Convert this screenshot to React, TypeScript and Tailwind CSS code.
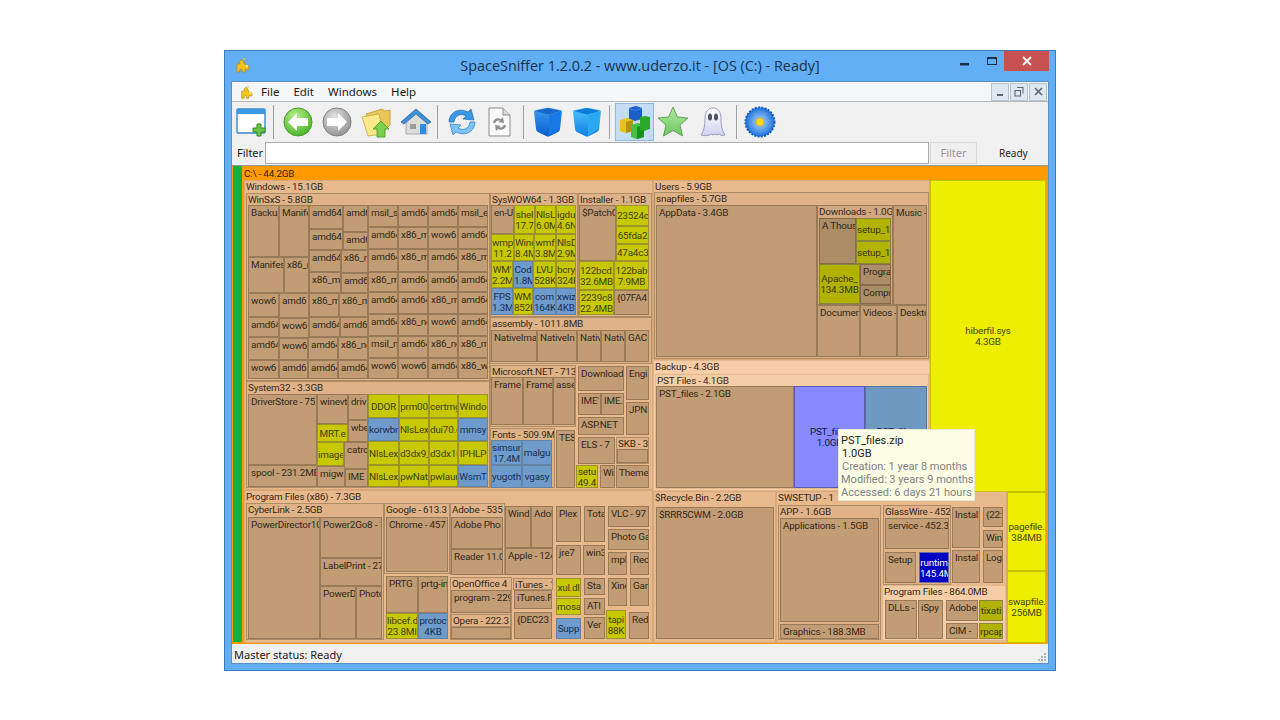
import React from 'react';

type Kind = 'l1' | 'l1b' | 'l2' | 'l3' | 'dir' | 'dir2' | 'yel' | 'yel2' | 'blue' | 'sys' | 'zip' | 'navy' | 'hib' | 'bare';
type Cell = [number, number, number, number, string, Kind];

const kinds: Record<Kind, string> = {
  l1: 'bg-[#e8b98d] border-[#d9a878] text-[#33291a] pl-[1px]',
  l1b: 'bg-[#f5cda6] border-[#e3b88c] text-[#33291a] pl-[1px]',
  l2: 'bg-[#dfb288] border-[#ad8c68] text-[#33291a] pl-[1px]',
  l3: 'bg-[#d4a87e] border-[#987a58] text-[#33291a] pl-[1px]',
  dir: 'bg-[#c29c74] border-[#997a58] text-[#33291a] pl-[2px] pt-[1px]',
  dir2: 'bg-[#ad8c68] border-[#86694a] text-[#33291a] pl-[2px] pt-[1px]',
  yel: 'bg-[#c8c800] border-[#9c9428] text-[#3f3f10] text-center justify-center',
  yel2: 'bg-[#b2b200] border-[#86863c] text-[#38380c] text-center justify-center',
  blue: 'bg-[#6f9bcc] border-[#6484a6] text-[#182f50] text-center justify-center',
  sys: 'bg-[#eeee00] border-[#c8c000] text-[#46460c] text-center justify-center',
  zip: 'bg-[#8888ff] border-[#5a5ab8] text-[#14144c] text-center justify-center',
  navy: 'bg-[#0000c4] border-[#6c6c9c] text-white text-center justify-center',
  hib: 'bg-[#7099c1] border-[#56759a] text-[#142c4c] text-center justify-center',
  bare: 'bg-[#c29c74] border-[#997a58] text-[#33291a]',
};

const xs = [368, 398, 428, 458, 488];
const ys = [205, 227, 249, 272, 292, 314, 336, 358, 379];
const sxsRows = [
  ['msil_s', 'amd64', 'amd64', 'msil_e'],
  ['amd64', 'x86_m', 'wow6', 'amd64'],
  ['amd64', 'x86_m', 'amd64', 'x86_m'],
  ['x86_m', 'amd64', 'amd64', 'amd64'],
  ['amd64', 'amd64', 'x86_m', 'amd64'],
  ['amd64', 'x86_ne', 'wow6', 'amd64'],
  ['msil_m', 'amd64', 'x86_ne', 'x86_m'],
  ['wow6', 'wow6', 'amd64', 'x86_w'],
];
const sxsGrid: Cell[] = sxsRows.flatMap((row, r) =>
  row.map((t, c): Cell => [xs[c], ys[r], xs[c + 1], ys[r + 1], t, 'dir'])
);

const sys32x = [368, 399, 429, 458, 488];
const sys32y = [394, 418, 441, 465, 487];
const sys32: [string, Kind][][] = [
  [['DDOR', 'yel'], ['prm00', 'yel'], ['certmg', 'yel'], ['Windo', 'yel']],
  [['korwbr', 'blue'], ['NlsLex', 'yel'], ['dui70.c', 'yel'], ['mmsy', 'blue']],
  [['NlsLex', 'yel'], ['d3dx9_', 'yel'], ['d3dx10', 'yel'], ['IPHLP', 'yel']],
  [['NlsLex', 'yel'], ['pwNat', 'yel'], ['pwlaur', 'yel'], ['WsmT', 'blue']],
];
const sys32Grid: Cell[] = sys32.flatMap((row, r) =>
  row.map(([t, k], c): Cell => [sys32x[c], sys32y[r], sys32x[c + 1], sys32y[r + 1], t, k])
);

const cells: Cell[] = [
  // top level blocks
  [244, 180, 653, 490, 'Windows - 15.1GB', 'l1'],
  [653, 180, 930, 360, 'Users - 5.9GB', 'l1'],
  [653, 360, 930, 491, 'Backup - 4.3GB', 'l1b'],
  [244, 490, 653, 643, 'Program Files (x86) - 7.3GB', 'l1'],
  [653, 491, 776, 643, '$Recycle.Bin - 2.2GB', 'l1'],
  [776, 491, 1007, 643, 'SWSETUP - 1', 'l1'],

  // Windows
  [246, 193, 490, 381, 'WinSxS - 5.8GB', 'l2'],
  [248, 205, 279, 257, 'Backup', 'dir'],
  [279, 205, 309, 257, 'Manife', 'dir'],
  [309, 205, 343, 229, 'amd64_', 'dir'],
  [343, 205, 368, 232, 'amd6', 'dir'],
  [309, 229, 343, 250, 'amd64_', 'dir'],
  [343, 232, 368, 250, 'amd6', 'dir'],
  [248, 257, 284, 293, 'Manifes', 'dir'],
  [284, 257, 309, 293, 'x86_r', 'dir'],
  [309, 250, 341, 272, 'amd64', 'dir'],
  [341, 250, 368, 273, 'x86_n', 'dir'],
  [309, 272, 341, 293, 'x86_mi', 'dir'],
  [341, 273, 368, 293, 'amd6', 'dir'],
  [248, 293, 279, 317, 'wow6', 'dir'],
  [279, 293, 309, 318, 'amd6', 'dir'],
  [309, 293, 339, 317, 'x86_m', 'dir'],
  [339, 293, 368, 317, 'x86_m', 'dir'],
  [248, 317, 279, 337, 'amd64', 'dir'],
  [279, 318, 309, 338, 'wow6', 'dir'],
  [309, 317, 340, 337, 'amd64', 'dir'],
  [340, 317, 368, 337, 'amd64', 'dir'],
  [248, 337, 279, 360, 'amd64', 'dir'],
  [279, 338, 308, 360, 'wow6', 'dir'],
  [308, 337, 338, 360, 'amd64', 'dir'],
  [338, 337, 368, 360, 'x86_ne', 'dir'],
  [248, 360, 279, 379, 'wow6', 'dir'],
  [279, 360, 308, 379, 'amd6', 'dir'],
  [308, 360, 338, 379, 'amd64', 'dir'],
  [338, 360, 368, 379, 'amd64', 'dir'],
  ...sxsGrid,

  [246, 381, 490, 488, 'System32 - 3.3GB', 'l2'],
  [248, 394, 317, 465, 'DriverStore - 75', 'dir'],
  [248, 465, 317, 487, 'spool - 231.2MB', 'dir'],
  [317, 394, 348, 424, 'winevt', 'dir'],
  [348, 394, 368, 420, 'driv', 'dir'],
  [317, 424, 348, 442, 'MRT.e', 'yel'],
  [348, 420, 368, 442, 'wbe', 'dir'],
  [317, 442, 344, 466, 'image', 'yel'],
  [344, 442, 368, 469, 'catro', 'dir'],
  [317, 466, 345, 487, 'migw', 'dir'],
  [345, 469, 368, 487, 'IME', 'dir'],
  ...sys32Grid,

  [490, 193, 578, 317, 'SysWOW64 - 1.3GB', 'l2'],
  [491, 205, 514, 234, 'en-U', 'dir'],
  [514, 205, 535, 234, 'shel\n17.7', 'yel'],
  [535, 205, 556, 234, 'NlsL\n6.0M', 'yel'],
  [556, 205, 576, 234, 'igdu\n4.6N', 'yel'],
  [491, 234, 514, 261, 'wmp\n11.2', 'yel'],
  [514, 234, 534, 261, 'Wind\n8.4M', 'yel'],
  [534, 234, 556, 261, 'wmf\n3.8M', 'yel'],
  [556, 234, 576, 261, 'NlsD\n2.9M', 'yel'],
  [491, 261, 513, 288, "WM'\n2.2M", 'yel'],
  [513, 261, 533, 288, 'Cod\n1.8M', 'blue'],
  [533, 261, 556, 288, 'LVU\n528K', 'yel'],
  [556, 261, 576, 288, 'bcry\n324K', 'yel'],
  [491, 288, 513, 315, 'FPS\n1.3M', 'blue'],
  [513, 288, 533, 315, 'WMS\n852K', 'yel'],
  [533, 288, 556, 315, 'com\n164K', 'blue'],
  [556, 288, 576, 315, 'xwiz\n4KB', 'blue'],

  [578, 193, 652, 317, 'Installer - 1.1GB', 'l2'],
  [579, 205, 616, 261, '$PatchC', 'dir'],
  [616, 205, 649, 226, '23524c', 'yel'],
  [616, 226, 649, 244, '65fda2', 'yel'],
  [616, 244, 649, 261, '47a4c3', 'yel'],
  [579, 261, 614, 290, '122bcd.\n32.6MB', 'yel'],
  [614, 261, 649, 290, '122bab\n7.9MB', 'yel'],
  [579, 290, 614, 315, '2239c8\n22.4MB', 'yel'],
  [614, 290, 649, 315, '{07FA4', 'dir'],

  [490, 317, 652, 364, 'assembly - 1011.8MB', 'l2'],
  [491, 330, 537, 362, 'NativeIma', 'dir'],
  [537, 330, 577, 362, 'NativeIn', 'dir'],
  [577, 330, 601, 362, 'Nativ', 'dir'],
  [601, 330, 625, 362, 'Nativ', 'dir'],
  [625, 330, 649, 362, 'GAC', 'dir'],

  [490, 365, 576, 427, 'Microsoft.NET - 713', 'l2'],
  [491, 377, 523, 425, 'Frame', 'dir'],
  [523, 377, 553, 425, 'Frame', 'dir'],
  [553, 377, 575, 425, 'asse', 'dir'],
  [490, 428, 555, 488, 'Fonts - 509.9M', 'l2'],
  [491, 440, 522, 465, 'simsun\n17.4M', 'blue'],
  [522, 440, 552, 465, 'malgu', 'blue'],
  [491, 465, 522, 488, 'yugoth', 'blue'],
  [522, 465, 552, 488, 'vgasy', 'blue'],
  [556, 430, 575, 488, 'TES', 'dir'],
  [578, 366, 624, 391, 'Download', 'dir'],
  [626, 366, 649, 400, 'Engi', 'dir'],
  [578, 393, 601, 415, "IME'", 'dir'],
  [601, 393, 624, 415, 'IME.', 'dir'],
  [626, 402, 649, 435, 'JPN', 'dir'],
  [578, 417, 624, 435, 'ASP.NET', 'dir'],
  [578, 437, 615, 464, 'ELS - 7', 'dir'],
  [616, 437, 649, 464, 'SKB - 3', 'l2'],
  [617, 449, 648, 463, '', 'bare'],
  [576, 465, 598, 488, 'setu\n49.4', 'yel'],
  [600, 465, 615, 488, 'Wir', 'dir'],
  [616, 465, 649, 488, 'Theme', 'dir'],

  // Users
  [654, 192, 929, 359, 'snapfiles - 5.7GB', 'l2'],
  [656, 205, 817, 357, 'AppData - 3.4GB', 'dir'],
  [817, 205, 893, 305, 'Downloads - 1.0G', 'l3'],
  [819, 218, 856, 264, 'A Thous', 'dir2'],
  [856, 218, 891, 241, 'setup_1', 'yel2'],
  [856, 241, 891, 264, 'setup_1', 'yel2'],
  [819, 264, 860, 304, 'Apache_\n134.3MB', 'yel2'],
  [860, 264, 891, 285, 'Progra', 'dir2'],
  [860, 285, 891, 304, 'Compr', 'dir2'],
  [893, 205, 927, 305, 'Music -', 'dir'],
  [817, 305, 860, 357, 'Documen', 'dir'],
  [860, 305, 897, 357, 'Videos -', 'dir'],
  [897, 305, 927, 357, 'Deskto', 'dir'],

  // Backup
  [655, 374, 929, 489, 'PST Files - 4.1GB', 'l1b'],
  [656, 386, 794, 488, 'PST_files - 2.1GB', 'dir'],
  [794, 386, 865, 488, 'PST_files\n1.0GB', 'zip'],
  [865, 386, 927, 488, 'PST_files\n1.0GB', 'hib'],

  // Program Files (x86)
  [246, 503, 384, 640, 'CyberLink - 2.5GB', 'l2'],
  [248, 517, 320, 639, 'PowerDirector10', 'dir'],
  [320, 517, 382, 558, 'Power2Go8 - 1', 'dir'],
  [320, 558, 382, 586, 'LabelPrint - 27', 'dir'],
  [320, 586, 356, 639, 'PowerD', 'dir'],
  [356, 586, 382, 639, 'Photo', 'dir'],
  [384, 503, 450, 574, 'Google - 613.3', 'l2'],
  [386, 517, 448, 572, 'Chrome - 457', 'dir'],
  [386, 576, 418, 613, 'PRTG', 'dir'],
  [418, 576, 448, 613, 'prtg-in', 'dir'],
  [386, 613, 418, 639, 'libcef.d\n23.8MI', 'yel'],
  [418, 613, 448, 639, 'protoc\n4KB', 'blue'],
  [450, 503, 505, 575, 'Adobe - 535', 'l2'],
  [451, 517, 503, 549, 'Adobe Pho', 'dir'],
  [451, 549, 503, 575, 'Reader 11.0', 'dir'],
  [505, 506, 531, 548, 'Windc', 'dir'],
  [531, 506, 553, 548, 'Adol', 'dir'],
  [505, 548, 553, 575, 'Apple - 124', 'dir'],
  [556, 506, 581, 542, 'Plex', 'dir'],
  [556, 545, 581, 575, 'jre7', 'dir'],
  [584, 506, 605, 542, 'Tota', 'dir'],
  [583, 545, 605, 575, 'win3', 'dir'],
  [608, 506, 649, 527, 'VLC - 97', 'dir'],
  [608, 529, 649, 550, 'Photo Ga', 'dir'],
  [608, 552, 627, 575, 'mpl', 'dir'],
  [630, 552, 649, 575, 'Rec', 'dir'],
  [450, 577, 512, 640, 'OpenOffice 4', 'l2'],
  [451, 590, 511, 613, 'program - 229', 'dir'],
  [451, 614, 511, 627, 'Opera - 222.3', 'l2'],
  [451, 627, 511, 639, '', 'bare'],
  [513, 578, 553, 590, 'iTunes - 1', 'l2'],
  [514, 590, 552, 609, 'iTunes.R', 'dir'],
  [514, 612, 552, 639, '{DEC23', 'dir'],
  [556, 578, 581, 597, 'xul.dl', 'yel'],
  [556, 598, 581, 615, 'mosa', 'yel'],
  [556, 618, 581, 639, 'Supp', 'blue'],
  [584, 578, 605, 595, 'Sta', 'dir'],
  [584, 598, 605, 615, 'ATI', 'dir'],
  [584, 617, 605, 639, 'Ver', 'dir'],
  [608, 578, 627, 606, 'Xino', 'dir'],
  [630, 578, 649, 606, 'Gar', 'dir'],
  [606, 610, 626, 639, 'tapi\n88K', 'yel'],
  [629, 612, 649, 639, 'Red', 'dir'],

  // $Recycle.Bin, SWSETUP
  [656, 507, 774, 639, '$RRR5CWM - 2.0GB', 'dir'],
  [778, 505, 881, 640, 'APP - 1.6GB', 'l2'],
  [780, 518, 879, 622, 'Applications - 1.5GB', 'dir'],
  [780, 624, 879, 639, 'Graphics - 188.3MB', 'dir'],
  [883, 505, 951, 585, 'GlassWire - 452', 'l2'],
  [885, 518, 949, 549, 'service - 452.3', 'dir'],
  [885, 552, 916, 583, 'Setup', 'dir'],
  [919, 552, 949, 583, 'runtim\n145.4M', 'navy'],
  [952, 507, 980, 548, 'Instal', 'dir'],
  [952, 550, 980, 583, 'Instal', 'dir'],
  [983, 507, 1003, 527, '{22:', 'dir'],
  [983, 530, 1003, 548, 'Win', 'dir'],
  [983, 550, 1003, 583, 'Logc', 'dir'],
  [882, 585, 1006, 641, 'Program Files - 864.0MB', 'l1b'],
  [885, 600, 917, 639, 'DLLs -', 'dir'],
  [918, 600, 943, 639, 'iSpy', 'dir'],
  [946, 600, 978, 621, 'Adobe', 'dir'],
  [946, 623, 978, 639, 'CIM -', 'dir'],
  [979, 600, 1003, 621, 'tixati', 'yel2'],
  [979, 623, 1003, 639, 'rpcap', 'yel2'],

  // system files
  [930, 180, 1046, 492, 'hiberfil.sys\n4.3GB', 'sys'],
  [1007, 492, 1046, 571, 'pagefile.\n384MB', 'sys'],
  [1007, 571, 1046, 643, 'swapfile.\n256MB', 'sys'],
];

// treemap canvas starts here on the page
const ORIGIN_X = 232;
const ORIGIN_Y = 166;

function Node({ cell }: { cell: Cell }) {
  const [x1, y1, x2, y2, text, kind] = cell;
  return (
    <div
      className={"absolute flex flex-col overflow-hidden whitespace-nowrap border font-['Roboto',sans-serif] text-[9.9px] tracking-[-0.2px] leading-[11px] " + kinds[kind]}
      style={{ left: x1 - ORIGIN_X, top: y1 - ORIGIN_Y, width: x2 - x1, height: y2 - y1 }}
    >
      {text.split('\n').map((line, i) => (
        <span key={i}>{line}</span>
      ))}
    </div>
  );
}

function Puzzle({ size }: { size: number }) {
  return (
    <svg width={size} height={size} viewBox="0 0 16 16">
      <path d="M2 7h3c-1-2 0-4 2-4s2 2 1 3h2v3c2-1 4 0 4 2s-2 2-4 1v3H7c1-2 0-3-1-3s-2 1-1 3H2z" fill="#f5c518" stroke="#b98a10" strokeWidth=".8" />
      <path d="M8 2l1-1 1 1-1 1zM9 8h4v3" fill="#fdf3a0" stroke="#d8a810" strokeWidth=".5" />
    </svg>
  );
}

function Cube({ id, light }: { id: string; light?: boolean }) {
  return (
    <svg width="32" height="32" viewBox="0 0 32 32">
      <defs>
        <linearGradient id={id} x1="0" y1="0" x2="0" y2="1">
          <stop offset="0" stopColor={light ? '#4fc4ff' : '#3f9df0'} />
          <stop offset="1" stopColor={light ? '#1080e4' : '#0a5cd0'} />
        </linearGradient>
      </defs>
      <path d="M2 6Q2 4 4 4L14 2Q16 1.500 18 2L28 4Q30 4 30 6L28 23Q28 25 26 26L18 30Q16 31 14 30L6 26Q4 25 4 23z" fill={'url(#' + id + ')'} />
      <path d="M3 5L16 2l13 3-13 3.500z" fill={light ? '#0f7ad8' : '#1a68c8'} />
      <path d="M17 9l12-4-2 18-10 7z" fill={light ? '#2aa8f4' : '#1878e4'} />
    </svg>
  );
}

function Toolbar() {
  return (
    <div className="flex items-center h-[40px] pl-[4px] bg-[#f0f0f0]">
      {/* new window */}
      <svg width="32" height="34" viewBox="0 0 32 34">
        <rect x="1" y="4" width="28" height="24" rx="1" fill="#fff" stroke="#3a86c8" strokeWidth="1.4" />
        <rect x="1" y="4" width="28" height="5" fill="#3a9ae8" />
        <path d="M21 19h4v4h4v4h-4v4h-4v-4h-4v-4h4z" fill="#6cc644" stroke="#2f8a20" />
      </svg>
      <div className="w-px h-[34px] bg-[#a0a0a0] ml-[5px] mr-[9px]" />
      {/* back */}
      <svg width="30" height="30" viewBox="0 0 30 30" className="mr-[9px]">
        <defs>
          <radialGradient id="gb" cx=".4" cy=".3" r=".8"><stop offset="0" stopColor="#b8f08a" /><stop offset="1" stopColor="#3fae1e" /></radialGradient>
        </defs>
        <circle cx="15" cy="15" r="14" fill="url(#gb)" stroke="#4a9a30" />
        <path d="M5 15l9-9v5h11v8H14v5z" fill="#fff" />
      </svg>
      {/* forward */}
      <svg width="30" height="30" viewBox="0 0 30 30" className="mr-[9px]">
        <defs>
          <radialGradient id="gf" cx=".4" cy=".3" r=".8"><stop offset="0" stopColor="#e0e0e0" /><stop offset="1" stopColor="#8c8c8c" /></radialGradient>
        </defs>
        <circle cx="15" cy="15" r="14" fill="url(#gf)" stroke="#808080" />
        <path d="M25 15l-9-9v5H5v8h11v5z" fill="#fff" />
      </svg>
      {/* folder up */}
      <svg width="32" height="32" viewBox="0 0 32 32" className="mr-[7px]">
        <path d="M5 8l16-5 3 2 5-1v15l-7 7-13 2z" fill="#e8c65a" stroke="#c09a30" strokeWidth=".8" />
        <path d="M1 11l17-3 4 20-15 2z" fill="#fbe98a" stroke="#c8a840" strokeWidth=".8" />
        <path d="M20 15l8 8h-4v8h-8v-8h-4z" fill="#7ad04a" stroke="#3f9a20" strokeWidth=".8" />
      </svg>
      {/* home */}
      <svg width="32" height="32" viewBox="0 0 32 32">
        <path d="M6 15v13h21V15L16 6z" fill="#dcdcdc" stroke="#9a9a9a" strokeWidth=".8" />
        <path d="M1 16L16 3l15 13-3 2L16 8 4 18z" fill="#3d8fd8" stroke="#2a6aa8" strokeWidth=".8" />
        <rect x="20" y="18" width="6" height="10" fill="#2f8ae0" />
        <rect x="10" y="18" width="6" height="5" fill="#9a9a9a" />
      </svg>
      <div className="w-px h-[34px] bg-[#a0a0a0] ml-[5px] mr-[8px]" />
      {/* refresh */}
      <svg width="32" height="32" viewBox="0 0 32 32" className="mr-[7px]">
        <path d="M3 16C3 7 12 1 22 6l3-3 3 11-11-1 3-3c-5-3-11-1-12 6z" fill="#3a98e8" stroke="#1f6ab0" strokeWidth=".7" />
        <path d="M29 16c0 9-9 15-19 10l-3 3-3-11 11 1-3 3c5 3 11 1 12-6z" fill="#7cc4f8" stroke="#2a7ac0" strokeWidth=".7" />
      </svg>
      {/* refresh doc */}
      <svg width="28" height="32" viewBox="0 0 28 32">
        <path d="M4 2h14l7 7v21H4z" fill="#fafafa" stroke="#8a8a8a" />
        <path d="M18 2v7h7" fill="#dcdcdc" stroke="#8a8a8a" />
        <path d="M8 17c0-4 5-6 8-4l2-2 1 6-6-1 2-1c-2-1-4 0-5 2zM21 19c0 4-5 6-8 4l-2 2-1-6 6 1-2 1c2 1 4 0 5-2z" fill="#8f8f8f" />
      </svg>
      <div className="w-px h-[34px] bg-[#a0a0a0] ml-[10px] mr-[8px]" />
      <div className="mr-[7px] flex"><Cube id="c1" /></div>
      <Cube id="c2" light />
      <div className="w-px h-[34px] bg-[#a0a0a0] ml-[6px] mr-[5px]" />
      {/* selected view button */}
      <div className="flex items-center justify-center w-[39px] h-[38px] bg-[#c4dcf4] border border-[#8fb8e0]">
        <svg width="33" height="34" viewBox="0 0 33 34">
          <path d="M11 3l7-2 6 2v11l-7 2-6-2z" fill="#1a5cc8" />
          <path d="M11 3l6 2 7-2v1l-7 2-6-2z" fill="#3a8af0" />
          <path d="M2 15l7-2 6 2v11l-7 2-6-2z" fill="#e8c020" />
          <path d="M8 17l7-2v11l-7 2z" fill="#b89010" />
          <path d="M13 20l7-2 6 2v12l-7 2-6-2z" fill="#45c040" />
          <path d="M19 22l7-2v12l-7 2z" fill="#1a9020" />
          <path d="M22 12l5-1 5 1v12l-6 2-4-1z" fill="#2aa82a" />
        </svg>
      </div>
      {/* star */}
      <svg width="32" height="32" viewBox="0 0 32 32" className="ml-[3px] mr-[9px]">
        <defs>
          <linearGradient id="st" x1="0" y1="0" x2="0" y2="1"><stop offset="0" stopColor="#b4e8a0" /><stop offset="1" stopColor="#6cc860" /></linearGradient>
        </defs>
        <path d="M16 1l4.500 10 10.500 1-8 7 2.500 11L16 24.500 6.500 30 9 19 1 12l10.500-1z" fill="url(#st)" stroke="#4f8f48" strokeWidth=".8" />
      </svg>
      {/* ghost */}
      <svg width="30" height="32" viewBox="0 0 30 32" className="mr-[3px]">
        <defs>
          <linearGradient id="gh" x1="0" y1="0" x2="0" y2="1"><stop offset="0" stopColor="#ffffff" /><stop offset="1" stopColor="#d0d0f0" /></linearGradient>
        </defs>
        <path d="M3 29c3-4 4-10 4-16C7 6 10 2 15 2s8 4 8 11c0 6 1 12 4 16-3 1-5 0-6-1-1 1-3 1-4 0-1 1-3 1-4 0-2 2-7 2-10 1z" fill="url(#gh)" stroke="#8a8aa8" strokeWidth=".8" />
        <ellipse cx="12" cy="11" rx="2" ry="3.500" fill="#505060" />
        <ellipse cx="18" cy="11" rx="2" ry="3.500" fill="#505060" />
      </svg>
      <div className="w-px h-[34px] bg-[#a0a0a0] mx-[5px]" />
      {/* flower */}
      <svg width="32" height="32" viewBox="0 0 32 32" className="ml-[2px]">
        <defs>
          <radialGradient id="fl" cx=".5" cy=".5" r=".55"><stop offset="0" stopColor="#b0d8ff" /><stop offset="1" stopColor="#1268d8" /></radialGradient>
        </defs>
        <circle cx="16" cy="16" r="14.500" fill="url(#fl)" stroke="#1460c0" strokeWidth="2" strokeDasharray="2 1.300" />
        <circle cx="16" cy="16" r="4" fill="#ffd820" stroke="#d09a10" strokeWidth=".5" />
      </svg>
    </div>
  );
}

function MdiButton({ children }: { children: React.ReactNode }) {
  return (
    <div className="flex items-center justify-center w-[18px] h-[18px] bg-[#dfe8f1] border border-[#b4c4d4] text-[#5a6a7a]">
      {children}
    </div>
  );
}

export default function App() {
  return (
    <div className="w-[1280px] h-[720px] bg-white pt-[50px] font-['Noto_Sans','Liberation_Sans',sans-serif] overflow-hidden">
      <div className="mx-auto flex h-[621px] w-[832px] flex-col border border-[#3a7cb8] bg-[#62aff6] px-[6px] pb-[6px]">
        {/* title bar */}
        <div className="relative flex h-[30px] shrink-0 items-center justify-center">
          <div className="absolute left-[4px] top-[6px]"><Puzzle size={16} /></div>
          <span className="text-[14.4px] text-[#17324a] font-['Open_Sans',sans-serif]">SpaceSniffer 1.2.0.2 - www.uderzo.it - [OS (C:) - Ready]</span>
          <svg width="14" height="14" viewBox="0 0 14 14" className="absolute left-[729px] top-[6px]">
            <rect x="0" y="6" width="9" height="2.5" fill="#1e3040" />
          </svg>
          <div className="absolute left-[756px] top-[6px] h-[8px] w-[10px] border border-t-2 border-[#1e3040]" />
          <div className="absolute left-[773px] top-0 flex h-[20px] w-[45px] items-center justify-center bg-[#c75050]">
            <svg width="10" height="10" viewBox="0 0 10 10"><path d="M1 1l8 8M9 1L1 9" stroke="#fff" strokeWidth="1.8" /></svg>
          </div>
        </div>

        {/* client */}
        <div className="flex min-h-0 flex-1 flex-col bg-[#f0f0f0] border border-[#5c90c4]">
          {/* menu */}
          <div className="flex h-[20px] shrink-0 items-center bg-[#f5f6f7] border-b border-[#b8b8b8] pl-[8px] text-[11.5px] text-[#1a1a1a]">
            <Puzzle size={14} />
            <span className="ml-[7px]">File</span>
            <span className="ml-[14px]">Edit</span>
            <span className="ml-[14px]">Windows</span>
            <span className="ml-[14px]">Help</span>
            <div className="ml-auto mr-[1px] flex gap-px">
              <MdiButton><div className="mt-[6px] h-[2px] w-[6px] bg-[#5a6a7a]" /></MdiButton>
              <MdiButton>
                <svg width="10" height="10" viewBox="0 0 10 10"><path d="M3 .5h6v6M1 3.5h5.5V9H1z" fill="none" stroke="#5a6a7a" strokeWidth="1.1" /></svg>
              </MdiButton>
              <MdiButton>
                <svg width="9" height="9" viewBox="0 0 9 9"><path d="M1 1l7 7M8 1L1 8" stroke="#5a6a7a" strokeWidth="1.7" /></svg>
              </MdiButton>
            </div>
          </div>

          <Toolbar />

          {/* filter row */}
          <div className="flex h-[24px] shrink-0 items-center bg-[#f0f0f0] text-[11px] text-[#222]">
            <span className="ml-[5px] w-[28px]">Filter</span>
            <div className="h-[22px] w-[664px] border border-[#abadb3] bg-white" />
            <div className="ml-[1px] flex h-[22px] w-[47px] items-center justify-center border border-[#d9d9d9] bg-[#efefef] text-[#9a9a9a]">Filter</div>
            <span className="ml-[22px] text-[10px]">Ready</span>
          </div>

          {/* treemap */}
          <div className="relative h-[479px] shrink-0 bg-[#ff9a00] border-t border-[#9a9a9a]">
            <div className="absolute left-[1px] top-0 bottom-[2px] w-[9px] bg-[#11b23c]" />
            <div className="absolute left-[12px] top-[1px] text-[#33240a] text-[9.9px] tracking-[-0.2px] leading-[13px] font-['Roboto',sans-serif]">C:\ - 44.2GB</div>
            {cells.map((c, i) => (
              <Node key={i} cell={c} />
            ))}
            {/* tooltip */}
            <div className="absolute left-[606px] top-[263px] h-[72px] w-[137px] whitespace-nowrap bg-[#fdfde6] pl-[2px] pt-[4px] font-['Roboto',sans-serif] text-[11px] leading-[13px] text-[#222] border border-[#e8e8d0]">
              <div>PST_files.zip</div>
              <div className="ml-[1px]">1.0GB</div>
              <div className="ml-[1px] text-[#808080]">Creation: 1 year 8 months</div>
              <div className="text-[#808080]">Modified: 3 years 9 months</div>
              <div className="text-[#808080]">Accessed: 6 days 21 hours</div>
            </div>
          </div>

          {/* status */}
          <div className="relative flex h-[19px] shrink-0 items-center bg-[#f0f0f0] pl-[2px] pt-[3px] text-[11px] text-[#222]">
            Master status: Ready
            <svg width="10" height="10" viewBox="0 0 10 10" className="absolute right-[1px] bottom-[1px]" fill="#a8b4c0">
              <rect x="7" y="1" width="2" height="2" /><rect x="4" y="4" width="2" height="2" /><rect x="7" y="4" width="2" height="2" />
              <rect x="1" y="7" width="2" height="2" /><rect x="4" y="7" width="2" height="2" /><rect x="7" y="7" width="2" height="2" />
            </svg>
          </div>
        </div>
      </div>
    </div>
  );
}
